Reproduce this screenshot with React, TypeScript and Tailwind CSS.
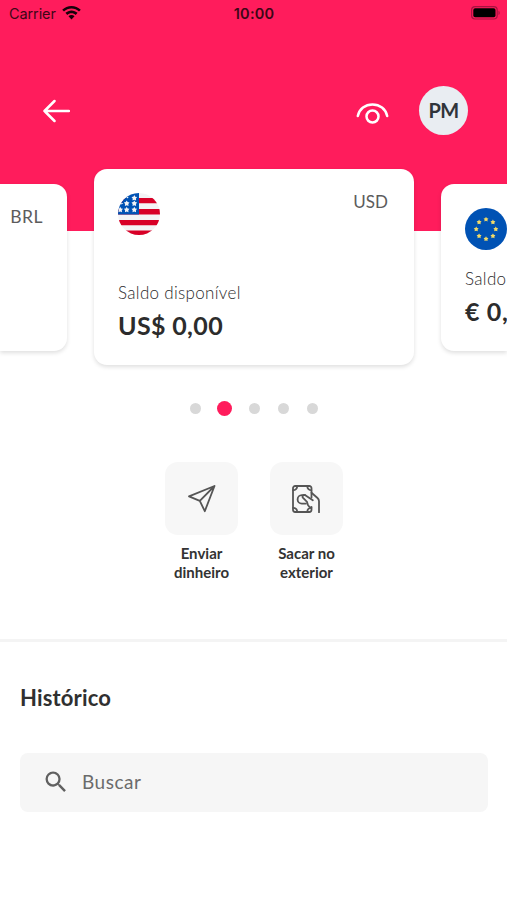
import { MdSearch } from "react-icons/md";

const STAR = "M0 -2.9 L.95 -1.2 L2.8 -.8 L1.6 .7 L1.8 2.6 L0 1.9 L-1.8 2.6 L-1.6 .7 L-2.8 -.8 L-.95 -1.2Z";

const usStars = [
  [16.3, 4.9],
  [8.7, 10.3],
  [16.3, 10.3],
  [2.2, 16.6],
  [8.7, 16.6],
  [16.3, 16.6],
];

const euStars = [0, 45, 90, 135, 180, 225, 270, 315];

function UsFlag() {
  return (
    <svg className="h-[42px] w-[42px]" viewBox="0 0 42 42">
      <clipPath id="us-round">
        <circle cx="21" cy="21" r="21" />
      </clipPath>
      <g clipPath="url(#us-round)">
        <path fill="#f3f3f5" d="M0 0h42v42H0z" />
        <path fill="#d80027" d="M0 4.9h42v5.4H0zM0 16h42v5.5H0zM0 26.9h42v5.4H0zM0 37.6h42V42H0z" />
        <path fill="#0052b4" d="M0 0h21v21.5H0z" />
        {usStars.map(([x, y]) => (
          <path key={`${x}-${y}`} d={STAR} fill="#f3f3f5" transform={`translate(${x} ${y})`} />
        ))}
        <path fill="#f3f3f5" d="M8.2 3.6l2.6.3-1.6 1.7zM3 9.6l2.3.8-2 1.2z" />
      </g>
    </svg>
  );
}

function EuFlag() {
  return (
    <svg className="h-[42px] w-[42px] shrink-0" viewBox="0 0 42 42">
      <circle cx="21" cy="21" r="21" fill="#0052b4" />
      {euStars.map((a) => (
        <path
          key={a}
          d={STAR}
          fill="#f2da68"
          transform={`translate(${21 + 9.8 * Math.sin((a * Math.PI) / 180)} ${21 - 9.8 * Math.cos((a * Math.PI) / 180)}) scale(.88)`}
        />
      ))}
    </svg>
  );
}

function StatusBar() {
  return (
    <div className="flex h-7 items-center justify-between pl-[9px] pr-[9px] font-['Inter',sans-serif] text-[#3d0716]">
      <div className="flex flex-1 items-center gap-[6px]">
        <span className="text-[14.5px] tracking-[-0.1px]">Carrier</span>
        <svg className="-mt-[3px] h-[14px] w-[19px]" viewBox="0 0 19 14" fill="#16020a">
          <path d="M9.5 0C13 0 16.3 1.4 18.8 3.7L17 5.6C15 3.7 12.4 2.6 9.5 2.6S4 3.7 2 5.6L.2 3.7C2.7 1.4 6 0 9.5 0Z" />
          <path d="M9.5 4.4C11.8 4.4 13.9 5.3 15.6 6.8L13.7 8.9C12.6 7.9 11.1 7.3 9.5 7.3S6.4 7.9 5.3 8.9L3.4 6.8C5.1 5.3 7.2 4.4 9.5 4.4Z" />
          <path d="M9.5 9C10.7 9 11.7 9.4 12.5 10.2L9.5 13.6L6.5 10.2C7.3 9.4 8.3 9 9.5 9Z" />
        </svg>
      </div>
      <span className="-ml-[2px] text-[14.5px] font-semibold tracking-[0.2px]">10:00</span>
      <div className="-mr-[3px] flex flex-1 justify-end">
        <svg className="-mt-[2px] h-[14px] w-[30px]" viewBox="0 0 30 14">
          <rect x=".6" y=".6" width="25.6" height="12.4" rx="3.5" fill="none" stroke="#a81240" strokeWidth="1.2" />
          <rect x="2.3" y="2.3" width="22.2" height="9" rx="1.8" fill="#000" />
          <path d="M27.5 4.8a2.4 2.4 0 0 1 0 4.2z" fill="#a81240" />
        </svg>
      </div>
    </div>
  );
}

function TopBar() {
  return (
    <div className="mt-[58px] flex h-[50px] items-center pl-[42px] pr-[39px]">
      <svg className="h-6 w-7" viewBox="0 0 28 24" fill="none" stroke="#fff" strokeWidth="2.5" strokeLinecap="round" strokeLinejoin="round">
        <path d="M27 12H2.500M12.500 2L2.500 12l10 10" />
      </svg>
      <svg className="ml-auto mr-[30px] mt-1 h-6 w-[33px]" viewBox="0 0 33 24" fill="none" stroke="#fff" strokeWidth="2.5" strokeLinecap="round">
        <path d="M1.8 15C3.4 7.9 9.2 3.4 16.5 3.4s13.1 4.5 14.7 11.6" />
        <circle cx="16.5" cy="15.5" r="6" />
      </svg>
      <div className="-mt-px flex h-[49px] w-[49px] items-center justify-center rounded-full bg-[#e9edf2] pb-px text-[20px] font-bold tracking-[-0.6px] text-[#30343a]">
        PM
      </div>
    </div>
  );
}

function Carousel() {
  return (
    <div className="-mt-[62px] flex items-center justify-between">
      <div className="h-[167px] w-[67px] rounded-r-[13px] bg-white pr-6 pt-[20px] text-right text-[17.5px] tracking-[0.5px] text-[#5c5c5c] shadow-[0_2px_4px_rgba(0,0,0,0.13)]">
        BRL
      </div>
      <div className="flex h-[196px] w-80 flex-col rounded-[13px] bg-white px-6 pb-[24px] pt-6 shadow-[0_2px_4px_rgba(0,0,0,0.13)]">
        <div className="flex justify-between">
          <UsFlag />
          <span className="-mt-[4px] mr-[2px] text-[17px] text-[#5c5c5c]">USD</span>
        </div>
        <span className="mt-auto text-[17px] font-light leading-6 tracking-[0.31px] text-[#2b2b2b]">Saldo disponível</span>
        <span className="mt-1 text-[25px] font-bold leading-8 tracking-[0.35px] text-[#2c2c2c]">US$ 0,00</span>
      </div>
      <div className="flex h-[167px] w-[66px] flex-col overflow-hidden whitespace-nowrap rounded-l-[13px] bg-white pb-[24px] pl-6 pt-6 shadow-[0_2px_4px_rgba(0,0,0,0.13)]">
        <EuFlag />
        <span className="mt-auto text-[17px] font-light leading-6 tracking-[0.31px] text-[#2b2b2b]">Saldo disponível</span>
        <span className="mt-1 text-[25px] font-bold leading-8 tracking-[0.6px] text-[#2c2c2c]">€ 0,00</span>
      </div>
    </div>
  );
}

function Dots() {
  return (
    <div className="mt-9 flex h-[15px] items-center justify-center pl-px">
      <div className="flex items-center gap-[18.4px]">
        <span className="h-[11px] w-[11px] rounded-full bg-[#d8d8d8]" />
        <span className="-mx-[2px] h-[15px] w-[15px] rounded-full bg-[#ff1c5c]" />
        <span className="h-[11px] w-[11px] rounded-full bg-[#d8d8d8]" />
        <span className="h-[11px] w-[11px] rounded-full bg-[#d8d8d8]" />
        <span className="h-[11px] w-[11px] rounded-full bg-[#d8d8d8]" />
      </div>
    </div>
  );
}

function Actions() {
  return (
    <div className="mt-[46px] flex justify-center gap-8 pl-px text-center text-[15px] font-bold leading-[18.5px] text-[#333]">
      <div className="w-[73px]">
        <div className="mb-[9px] flex h-[73px] items-center justify-center rounded-[13px] bg-[#f7f7f7]">
          <svg className="h-7 w-7" viewBox="0 0 28 28" fill="none" stroke="#555" strokeWidth="1.8" strokeLinejoin="round" strokeLinecap="round">
            <path d="M26.5 1L1 11.4l10.8 4.4 5 10.4zM26.5 1L11.8 15.8" />
          </svg>
        </div>
        Enviar dinheiro
      </div>
      <div className="w-[73px]">
        <div className="mb-[9px] flex h-[73px] items-center justify-center rounded-[13px] bg-[#f7f7f7] pr-px">
          <svg className="h-7 w-7" viewBox="0 0 28 28" fill="none" stroke="#555" strokeWidth="1.8" strokeLinejoin="round" strokeLinecap="round">
            <path d="M19.5 12.500V3.200a2.200 2.200 0 0 0-2.200-2.200H3.200A2.200 2.200 0 0 0 1 3.200v21.600A2.200 2.200 0 0 0 3.200 27h14.100a2.200 2.200 0 0 0 2.200-2.200V22" />
            <path d="M5.200 1.200A4 4 0 0 1 1.200 5.200M15.300 1.200A4 4 0 0 0 19.300 5.200M1.200 22.800A4 4 0 0 1 5.200 26.800M15.300 26.800A4 4 0 0 1 19.300 22.800" />
            <path d="M13.300 10.200H9.800a4.200 4.200 0 0 0 0 8.400h4" />
            <path d="M19.500 7.800l6 5.200c1 .9 1.500 2 1.500 3.300v11M20.800 15.200l-7.500-5c-2-1-3.600 1.200-2.200 2.700l3.900 3.900c.2 2.400.9 4.200 3.300 5.700" />
          </svg>
        </div>
        Sacar no exterior
      </div>
    </div>
  );
}

export default function App() {
  return (
    <main className="flex h-[900px] w-[507px] flex-col overflow-hidden bg-white font-['Lato','Noto_Sans',sans-serif]">
      <header className="h-[231px] shrink-0 bg-[#ff1c5c]">
        <StatusBar />
        <TopBar />
      </header>
      <Carousel />
      <Dots />
      <Actions />
      <section className="mt-[58px] border-t-[3px] border-[#f4f4f4] px-5">
        <h1 className="mt-[40px] text-[22px] font-bold leading-8 tracking-[0.15px] text-[#303030]">Histórico</h1>
        <div className="mt-[39px] flex h-[59px] w-[468px] items-center rounded-lg bg-[#f6f6f6] pl-[22px] text-[#6b6b6b]">
          <MdSearch className="-mt-[2px] h-7 w-7 text-[#606060]" />
          <span className="ml-3 text-[19px] tracking-[0.5px]">Buscar</span>
        </div>
      </section>
    </main>
  );
}
